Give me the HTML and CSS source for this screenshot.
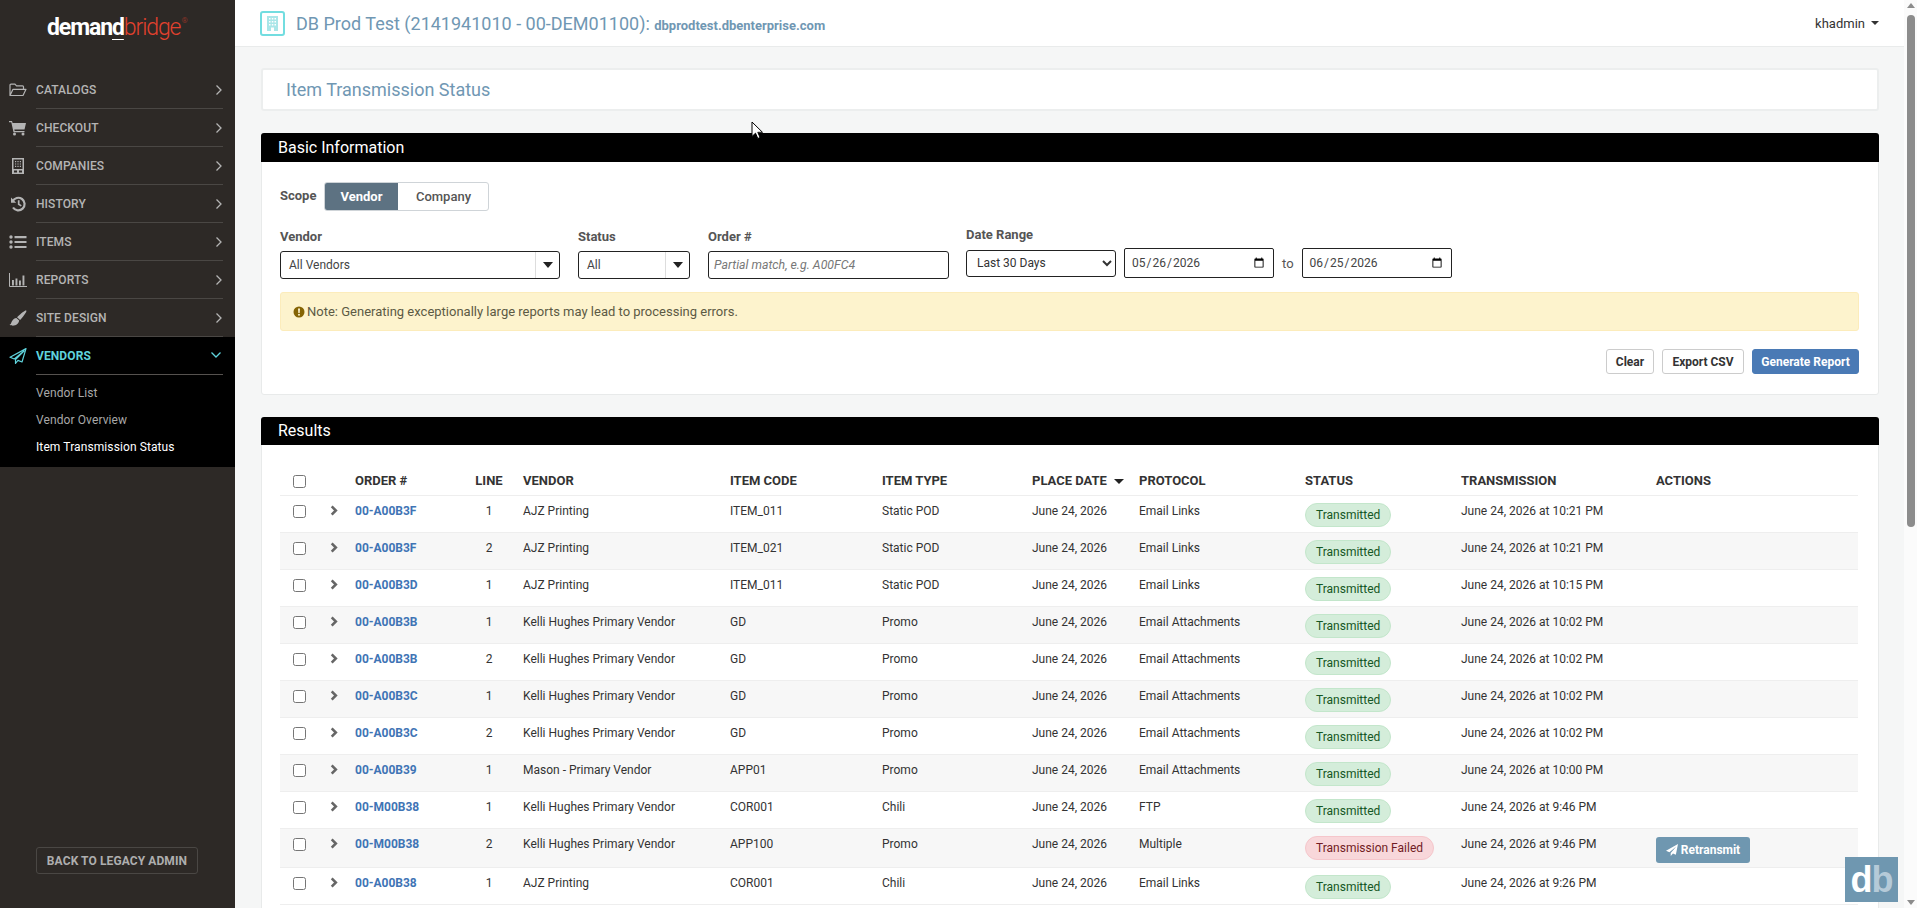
FILE: index.html
```html
<!DOCTYPE html>
<html lang="en">
<head>
<meta charset="utf-8">
<title>Item Transmission Status</title>
<link rel="stylesheet" href="styles.css">
</head>
<body>
<div class="app">
  <aside class="sidebar">
    <div class="logo"><span class="logo-a">deman<u>d</u></span><span class="logo-b">bridge</span><sup class="logo-r">®</sup></div>
    <nav class="nav">
      <a class="nav-item"><svg class="nav-ico" viewBox="0 0 18 14"><path d="M1 12.5V2.2c0-.6.4-1 1-1h4l1.5 1.6h6c.6 0 1 .4 1 1V6M1 12.5 4 6.3h13l-3 6.2H1Z" fill="none" stroke="currentColor" stroke-width="1.2" stroke-linejoin="round"/></svg><span class="nav-label">Catalogs</span><svg class="chev" viewBox="0 0 8 12"><path d="M1.5 1.5 6 6l-4.500 4.500" fill="none" stroke="currentColor" stroke-width="1.300"/></svg></a>
      <a class="nav-item"><svg class="nav-ico" viewBox="0 0 18 15"><path d="M0 .6h3l.6 1.900H17l-1.500 6.500H5.300l.4 1.500h9.800v1.200H4.500L2.300 1.800H0V.6Z" fill="currentColor"/><circle cx="5.500" cy="13.400" r="1.500" fill="currentColor"/><circle cx="14" cy="13.400" r="1.500" fill="currentColor"/></svg><span class="nav-label">Checkout</span><svg class="chev" viewBox="0 0 8 12"><path d="M1.500 1.500 6 6l-4.500 4.500" fill="none" stroke="currentColor" stroke-width="1.300"/></svg></a>
      <a class="nav-item"><svg class="nav-ico" viewBox="0 0 18 16"><path fill-rule="evenodd" d="M3 0h12v16H3V0Zm1.500 1.500V11h9V1.500h-9ZM6 3h1.200v1.200H6V3Zm2.400 0h1.200v1.200H8.400V3Zm2.400 0H12v1.200h-1.200V3ZM6 5.400h1.200v1.200H6V5.400Zm2.400 0h1.200v1.200H8.400V5.400Zm2.400 0H12v1.200h-1.200V5.400ZM6 7.800h1.200V9H6V7.800Zm2.400 0h1.200V9H8.400V7.800Zm2.400 0H12V9h-1.200V7.800ZM5 12.500V14.500h3v-2H5Zm5 0v2h3v-2h-3Z" fill="currentColor"/></svg><span class="nav-label">Companies</span><svg class="chev" viewBox="0 0 8 12"><path d="M1.500 1.500 6 6l-4.500 4.500" fill="none" stroke="currentColor" stroke-width="1.300"/></svg></a>
      <a class="nav-item"><svg class="nav-ico" viewBox="0 0 18 16"><path d="M3.600 5.400A6.300 6.300 0 1 1 4 11.500" fill="none" stroke="currentColor" stroke-width="2.200"/><path d="M2 1.600v5.200h5.200Z" fill="currentColor"/><path d="M9.700 4.300v4l2.600 1.600" fill="none" stroke="currentColor" stroke-width="1.700"/></svg><span class="nav-label">History</span><svg class="chev" viewBox="0 0 8 12"><path d="M1.500 1.500 6 6l-4.500 4.500" fill="none" stroke="currentColor" stroke-width="1.300"/></svg></a>
      <a class="nav-item"><svg class="nav-ico" viewBox="0 0 18 14"><circle cx="2" cy="2" r="1.700" fill="currentColor"/><circle cx="2" cy="7" r="1.700" fill="currentColor"/><circle cx="2" cy="12" r="1.700" fill="currentColor"/><path d="M5.500 1h12v2.200h-12zM5.500 5.900h12v2.200h-12zM5.500 10.900h12v2.200h-12z" fill="currentColor"/></svg><span class="nav-label">Items</span><svg class="chev" viewBox="0 0 8 12"><path d="M1.500 1.500 6 6l-4.500 4.500" fill="none" stroke="currentColor" stroke-width="1.300"/></svg></a>
      <a class="nav-item"><svg class="nav-ico" viewBox="0 0 18 14"><path d="M.5 0v13.500H18" fill="none" stroke="currentColor" stroke-width="1"/><path d="M3 7h1.900v5.500H3zM6.500 5.500h1.900v7H6.500zM10 7.500h1.900v5H10zM13.500 2.500h1.900v10h-1.900z" fill="currentColor"/></svg><span class="nav-label">Reports</span><svg class="chev" viewBox="0 0 8 12"><path d="M1.500 1.500 6 6l-4.500 4.500" fill="none" stroke="currentColor" stroke-width="1.300"/></svg></a>
      <a class="nav-item"><svg class="nav-ico" viewBox="0 0 18 16"><path d="M17 .2c.7.600.3 1.700-.3 2.600-1.700 2.600-3.800 5.600-5.600 7.100L8 7.300C10 5.400 14.700.9 17 .2ZM7.400 8l2.800 2.600c-.3 2.500-2.200 4.700-5.200 5-1.500.2-3.500-.1-4.500-.8 1.700-.7 1.500-2 2.300-3.400C3.700 9.600 5.600 8.200 7.400 8Z" fill="currentColor"/></svg><span class="nav-label">Site Design</span><svg class="chev" viewBox="0 0 8 12"><path d="M1.500 1.500 6 6l-4.500 4.500" fill="none" stroke="currentColor" stroke-width="1.300"/></svg></a>
      <div class="nav-open">
        <a class="nav-item nav-item-active"><svg class="nav-ico" viewBox="0 0 18 16"><path d="M17 .6 1 9.300l4.300 1.700L15 3 6.500 11.600v3.800l2.500-3 4 1.600L17 .6Z" fill="none" stroke="currentColor" stroke-width="1.200" stroke-linejoin="round"/></svg><span class="nav-label">Vendors</span><svg class="chev-down" viewBox="0 0 12 8"><path d="M1.500 1.500 6 6l4.500-4.500" fill="none" stroke="currentColor" stroke-width="1.300"/></svg></a>
        <div class="subnav">
          <a class="sub-item">Vendor List</a>
          <a class="sub-item">Vendor Overview</a>
          <a class="sub-item sub-current">Item Transmission Status</a>
        </div>
      </div>
    </nav>
    <button class="legacy">BACK TO LEGACY ADMIN</button>
  </aside>

  <div class="main">
    <header class="topbar">
      <span class="company-ico"><svg viewBox="0 0 11 15" width="11" height="15"><path fill-rule="evenodd" d="M0 0h11v15H0V0Zm2 2v1.500h1.500V2H2Zm2.800 0v1.500h1.500V2H4.800Zm2.700 0v1.500H9V2H7.500ZM2 5v1.500h1.500V5H2Zm2.800 0v1.500h1.500V5H4.800Zm2.700 0v1.500H9V5H7.500ZM2 8v1.500h1.500V8H2Zm2.800 0v1.500h1.500V8H4.800Zm2.700 0v1.500H9V8H7.500ZM4 11.500V15h3v-3.500H4Z" fill="#a9e6e8"/></svg></span>
      <h1 class="company">DB Prod Test (2141941010 - 00-DEM01100): <small class="domain">dbprodtest.dbenterprise.com</small></h1>
      <span class="user">khadmin<i class="caret"></i></span>
    </header>
    <div class="content">
      <div class="title-card">Item Transmission Status</div>

      <section class="card card-basic">
        <h2 class="card-head">Basic Information</h2>
        <div class="card-body">
          <div class="scope-row">
            <span class="lbl">Scope</span>
            <div class="toggle"><span class="toggle-on">Vendor</span><span class="toggle-off">Company</span></div>
          </div>
          <div class="filters">
            <div class="field f-vendor"><span class="lbl">Vendor</span><div class="combo"><span class="combo-val">All Vendors</span><span class="combo-btn"><i class="caret-lg"></i></span></div></div>
            <div class="field f-status"><span class="lbl">Status</span><div class="combo"><span class="combo-val">All</span><span class="combo-btn"><i class="caret-lg"></i></span></div></div>
            <div class="field f-order"><span class="lbl">Order #</span><input class="text-in" placeholder="Partial match, e.g. A00FC4"></div>
            <div class="field f-range">
              <span class="lbl lbl-range">Date Range</span>
              <div class="range-row">
                <select class="range-sel"><option>Last 30 Days</option></select>
                <input class="date-in" type="date" value="2026-05-26">
                <span class="to">to</span>
                <input class="date-in" type="date" value="2026-06-25">
              </div>
            </div>
          </div>
          <div class="alert"><svg class="alert-ico" viewBox="0 0 12 12"><path fill-rule="evenodd" d="M6 .5a5.500 5.500 0 1 1 0 11 5.500 5.500 0 0 1 0-11ZM5 2.500l.3 4.500h1.400L7 2.500H5Zm1 5.300a1 1 0 1 0 0 2 1 1 0 0 0 0-2Z" fill="#856404"/></svg>Note: Generating exceptionally large reports may lead to processing errors.</div>
          <div class="actions">
            <button class="btn btn-clear">Clear</button>
            <button class="btn btn-export">Export CSV</button>
            <button class="btn btn-primary">Generate Report</button>
          </div>
        </div>
      </section>

      <section class="card card-results">
        <h2 class="card-head">Results</h2>
        <div class="table-wrap">
          <table class="grid">
            <colgroup><col class="c1"><col class="c2"><col class="c3"><col class="c4"><col class="c5"><col class="c6"><col class="c7"><col class="c8"><col class="c9"><col class="c10"><col class="c11"><col class="c12"></colgroup>
            <thead>
              <tr><th class="cb"><input type="checkbox"></th><th></th><th>ORDER #</th><th class="ctr">LINE</th><th class="pad">VENDOR</th><th>ITEM CODE</th><th>ITEM TYPE</th><th>PLACE DATE<i class="caret-sort"></i></th><th>PROTOCOL</th><th>STATUS</th><th>TRANSMISSION</th><th>ACTIONS</th></tr>
            </thead>
            <tbody id="rows">
              <tr><td class="cb"><input type="checkbox"></td><td><svg class="row-chev" viewBox="0 0 8 12"><path d="M1.500 1.500 6 6l-4.500 4.500" fill="none" stroke="currentColor" stroke-width="2.800"/></svg></td><td><a class="order">00-A00B3F</a></td><td class="ctr">1</td><td class="pad">AJZ Printing</td><td>ITEM_011</td><td>Static POD</td><td>June 24, 2026</td><td>Email Links</td><td><span class="badge ok">Transmitted</span></td><td>June 24, 2026 at 10:21 PM</td><td></td></tr>
              <tr><td class="cb"><input type="checkbox"></td><td><svg class="row-chev" viewBox="0 0 8 12"><path d="M1.500 1.500 6 6l-4.500 4.500" fill="none" stroke="currentColor" stroke-width="2.800"/></svg></td><td><a class="order">00-A00B3F</a></td><td class="ctr">2</td><td class="pad">AJZ Printing</td><td>ITEM_021</td><td>Static POD</td><td>June 24, 2026</td><td>Email Links</td><td><span class="badge ok">Transmitted</span></td><td>June 24, 2026 at 10:21 PM</td><td></td></tr>
              <tr><td class="cb"><input type="checkbox"></td><td><svg class="row-chev" viewBox="0 0 8 12"><path d="M1.500 1.500 6 6l-4.500 4.500" fill="none" stroke="currentColor" stroke-width="2.800"/></svg></td><td><a class="order">00-A00B3D</a></td><td class="ctr">1</td><td class="pad">AJZ Printing</td><td>ITEM_011</td><td>Static POD</td><td>June 24, 2026</td><td>Email Links</td><td><span class="badge ok">Transmitted</span></td><td>June 24, 2026 at 10:15 PM</td><td></td></tr>
              <tr><td class="cb"><input type="checkbox"></td><td><svg class="row-chev" viewBox="0 0 8 12"><path d="M1.500 1.500 6 6l-4.500 4.500" fill="none" stroke="currentColor" stroke-width="2.800"/></svg></td><td><a class="order">00-A00B3B</a></td><td class="ctr">1</td><td class="pad">Kelli Hughes Primary Vendor</td><td>GD</td><td>Promo</td><td>June 24, 2026</td><td>Email Attachments</td><td><span class="badge ok">Transmitted</span></td><td>June 24, 2026 at 10:02 PM</td><td></td></tr>
              <tr><td class="cb"><input type="checkbox"></td><td><svg class="row-chev" viewBox="0 0 8 12"><path d="M1.500 1.500 6 6l-4.500 4.500" fill="none" stroke="currentColor" stroke-width="2.800"/></svg></td><td><a class="order">00-A00B3B</a></td><td class="ctr">2</td><td class="pad">Kelli Hughes Primary Vendor</td><td>GD</td><td>Promo</td><td>June 24, 2026</td><td>Email Attachments</td><td><span class="badge ok">Transmitted</span></td><td>June 24, 2026 at 10:02 PM</td><td></td></tr>
              <tr><td class="cb"><input type="checkbox"></td><td><svg class="row-chev" viewBox="0 0 8 12"><path d="M1.500 1.500 6 6l-4.500 4.500" fill="none" stroke="currentColor" stroke-width="2.800"/></svg></td><td><a class="order">00-A00B3C</a></td><td class="ctr">1</td><td class="pad">Kelli Hughes Primary Vendor</td><td>GD</td><td>Promo</td><td>June 24, 2026</td><td>Email Attachments</td><td><span class="badge ok">Transmitted</span></td><td>June 24, 2026 at 10:02 PM</td><td></td></tr>
              <tr><td class="cb"><input type="checkbox"></td><td><svg class="row-chev" viewBox="0 0 8 12"><path d="M1.500 1.500 6 6l-4.500 4.500" fill="none" stroke="currentColor" stroke-width="2.800"/></svg></td><td><a class="order">00-A00B3C</a></td><td class="ctr">2</td><td class="pad">Kelli Hughes Primary Vendor</td><td>GD</td><td>Promo</td><td>June 24, 2026</td><td>Email Attachments</td><td><span class="badge ok">Transmitted</span></td><td>June 24, 2026 at 10:02 PM</td><td></td></tr>
              <tr><td class="cb"><input type="checkbox"></td><td><svg class="row-chev" viewBox="0 0 8 12"><path d="M1.500 1.500 6 6l-4.500 4.500" fill="none" stroke="currentColor" stroke-width="2.800"/></svg></td><td><a class="order">00-A00B39</a></td><td class="ctr">1</td><td class="pad">Mason - Primary Vendor</td><td>APP01</td><td>Promo</td><td>June 24, 2026</td><td>Email Attachments</td><td><span class="badge ok">Transmitted</span></td><td>June 24, 2026 at 10:00 PM</td><td></td></tr>
              <tr><td class="cb"><input type="checkbox"></td><td><svg class="row-chev" viewBox="0 0 8 12"><path d="M1.500 1.500 6 6l-4.500 4.500" fill="none" stroke="currentColor" stroke-width="2.800"/></svg></td><td><a class="order">00-M00B38</a></td><td class="ctr">1</td><td class="pad">Kelli Hughes Primary Vendor</td><td>COR001</td><td>Chili</td><td>June 24, 2026</td><td>FTP</td><td><span class="badge ok">Transmitted</span></td><td>June 24, 2026 at 9:46 PM</td><td></td></tr>
              <tr class="row-tall"><td class="cb"><input type="checkbox"></td><td><svg class="row-chev" viewBox="0 0 8 12"><path d="M1.500 1.500 6 6l-4.500 4.500" fill="none" stroke="currentColor" stroke-width="2.800"/></svg></td><td><a class="order">00-M00B38</a></td><td class="ctr">2</td><td class="pad">Kelli Hughes Primary Vendor</td><td>APP100</td><td>Promo</td><td>June 24, 2026</td><td>Multiple</td><td><span class="badge bad">Transmission Failed</span></td><td>June 24, 2026 at 9:46 PM</td><td><button class="retransmit"><svg viewBox="0 0 14 14" width="12" height="12"><path d="M14 0 0 8l4 1.600L12 3 5.500 10.500V14l2.600-2.900 3.400 1.400L14 0Z" fill="#fff"/></svg>Retransmit</button></td></tr>
              <tr><td class="cb"><input type="checkbox"></td><td><svg class="row-chev" viewBox="0 0 8 12"><path d="M1.500 1.500 6 6l-4.500 4.500" fill="none" stroke="currentColor" stroke-width="2.800"/></svg></td><td><a class="order">00-A00B38</a></td><td class="ctr">1</td><td class="pad">AJZ Printing</td><td>COR001</td><td>Chili</td><td>June 24, 2026</td><td>Email Links</td><td><span class="badge ok">Transmitted</span></td><td>June 24, 2026 at 9:26 PM</td><td></td></tr>
            </tbody>
          </table>
        </div>
      </section>
    </div>
  </div>

  <div class="scrollbar"><i class="sb-up"></i><div class="sb-track"><div class="sb-thumb"></div></div><i class="sb-down"></i></div>
</div>
<div class="watermark"><span class="wm-d">d</span><span class="wm-b">b</span></div>
<svg class="cursor" viewBox="0 0 12 19" width="12" height="19"><path d="M1 1v14.500l3.500-3.300 2.300 5.300 2.300-1-2.300-5.200h4.700L1 1Z" fill="#fff" stroke="#000" stroke-width="1"/></svg>
</body>
</html>
```
FILE: styles.css
```css
* { box-sizing: border-box; }
html, body { margin: 0; height: 100%; overflow: hidden; }
body { font-family: Roboto, "Liberation Sans", sans-serif; font-size: 12px; color: #333; background: #f5f6f6; }
.app { display: flex; height: 100vh; overflow: hidden; }

/* sidebar */
.sidebar { flex: 0 0 235px; background: #2d2926; display: flex; flex-direction: column; }
.logo { height: 71px; padding: 13px 0 0 47px; font-size: 23px; line-height: 30px; letter-spacing: -1.1px; white-space: nowrap; }
.logo-a { color: #fff; font-weight: 700; }
.logo-a u { text-underline-offset: 4px; text-decoration-thickness: 1px; }
.logo-b { color: #e2412e; font-weight: 300; }
.logo-r { color: #8c3327; font-size: 8px; vertical-align: 12px; line-height: 0; letter-spacing: 0; margin-left: 1px; }
.nav { display: flex; flex-direction: column; flex: 1; }
.nav-item { height: 38px; display: flex; align-items: center; color: #b4b4b4; position: relative; }
.nav-ico { width: 18px; height: 16px; margin-left: 9px; flex: none; }
.nav-label { flex: 1; margin-left: 9px; font-size: 12px; font-weight: 500; text-transform: uppercase; align-self: stretch; display: flex; align-items: center; border-bottom: 1px solid #4a4744; margin-right: 12px; margin-top: 0; letter-spacing: .1px; }
.chev { position: absolute; right: 12px; top: 13px; width: 8px; height: 12px; }
.chev-down { position: absolute; right: 13px; top: 14px; width: 12px; height: 8px; }
.nav-open { background: #000; height: 130px; }
.nav-item-active { color: #5fd3dc; }
.nav-item-active .nav-label { font-weight: 700; border-bottom-color: #56524f; }
.subnav { display: flex; flex-direction: column; padding-left: 36px; padding-top: 5px; }
.sub-item { height: 27px; line-height: 27px; color: #a8a8a8; font-size: 12px; letter-spacing: .1px; }
.sub-current { color: #fff; }
.legacy { align-self: flex-start; margin: 0 0 34px 36px; width: 162px; height: 27px; background: transparent; border: 1px solid #4a4744; border-radius: 3px; color: #aeaeae; font: 700 12px Roboto, sans-serif; letter-spacing: .1px; padding: 0; }

/* main */
.main { flex: 1; min-width: 0; display: flex; flex-direction: column; overflow: hidden; }
.topbar { flex: none; height: 47px; background: #fff; border-bottom: 1px solid #e9ebeb; display: flex; align-items: center; padding: 0 25px 0 25px; }
.company-ico { width: 25px; height: 25px; border: 2px solid #72dde0; border-radius: 3px; display: flex; align-items: center; justify-content: center; flex: none; }
.company { margin: 0 0 0 11px; flex: 1; font-size: 18px; font-weight: 400; color: #7097b3; white-space: nowrap; }
.domain { font-size: 13px; font-weight: 700; }
.user { font-size: 13px; color: #333; display: flex; align-items: center; }
.caret { width: 0; height: 0; margin-left: 6px; border: 4px solid transparent; border-top-color: #333; border-bottom: 0; }
.content { flex: 1; padding: 21px 25px 0 26px; overflow: hidden; }
.title-card { height: 43px; background: #fff; border: 2px solid #eceeee; border-radius: 3px; padding-left: 23px; font-size: 18px; line-height: 39px; color: #7097b3; }

.card { background: #fff; border: 1px solid #e8eaea; border-radius: 3px; margin-top: 22px; }
.card-head { margin: -1px -1px 0; height: 28px; background: #000; color: #fff; font-size: 16px; line-height: 28px; font-weight: 400; padding-left: 17px; border-radius: 3px 3px 0 0; }
.card-basic { height: 262px; }
.card-basic .card-head { height: 29px; line-height: 30px; }
.card-body { padding: 20px 19px 0 18px; }
.lbl { font-size: 13px; font-weight: 700; color: #555; }
.scope-row { display: flex; align-items: center; gap: 8px; margin-top: 0; }
.scope-row .lbl { margin-left: 0; position: relative; top: -1px; }
.toggle { display: flex; height: 29px; width: 165px; border: 1px solid #cfd4d8; border-radius: 3px; overflow: hidden; }
.toggle-on { width: 74px; background: #5d7282; color: #fff; font-weight: 700; font-size: 13px; display: flex; align-items: center; justify-content: center; margin: -1px 0 -1px -1px; }
.toggle-off { flex: 1; color: #555; font-weight: 500; font-size: 13px; display: flex; align-items: center; justify-content: center; }
.filters { display: flex; margin-top: 18px; }
.field { display: flex; flex-direction: column; gap: 6px; }
.field > .lbl { height: 16px; line-height: 16px; }
.f-vendor { width: 280px; margin-right: 18px; }
.f-status { width: 112px; margin-right: 18px; }
.f-order { width: 241px; margin-right: 17px; }
.f-range { margin-top: -2px; gap: 5px; }
.field .lbl-range { color: #555; margin-bottom: 0; height: 16px; line-height: 16px; }
.combo { height: 28px; border: 1px solid #222; border-radius: 3px; display: flex; align-items: center; background: #fff; }
.combo-val { flex: 1; padding-left: 8px; font-size: 12px; color: #444; }
.combo-btn { width: 24px; height: 100%; border-left: 1px solid #ddd; display: flex; align-items: center; justify-content: center; }
.caret-lg { width: 0; height: 0; border: 5px solid transparent; border-top: 6px solid #222; border-bottom: 0; }
.text-in { height: 28px; border: 1px solid #222; border-radius: 3px; padding: 0 5px; font: 12.300px Roboto, sans-serif; outline: 0; }
.text-in::placeholder { font-style: italic; color: #777; }
.range-row { display: flex; align-items: center; height: 30px; }
.range-sel { width: 150px; height: 27px; border: 1px solid #222; border-radius: 3px; background: #fff; padding-left: 6px; font: 12px Roboto, sans-serif; color: #333; }
.date-in { width: 150px; height: 30px; border: 1px solid #222; border-radius: 2px; margin-left: 8px; padding: 0 6px; font: 12px Roboto, sans-serif; color: #444; background: #fff; }
.to { margin: 0 8px; font-size: 13px; color: #555; }
.to + .date-in { margin-left: 0; }
.alert { margin-top: 13px; height: 39px; background: #fdf3cd; border: 1px solid #fcecbb; border-radius: 3px; padding-left: 12px; display: flex; align-items: center; font-size: 13px; color: #5c5a44; }
.alert-ico { width: 12px; height: 12px; margin-right: 2px; }
.actions { display: flex; justify-content: flex-end; gap: 8px; margin-top: 18px; }
.btn { height: 25px; border-radius: 3px; font: 700 12px Roboto, sans-serif; padding: 0; background: #fff; color: #333; border: 1px solid #ccc; }
.btn-clear { width: 48px; }
.btn-export { width: 82px; }
.btn-primary { width: 107px; background: #4a7ab5; border-color: #4a7ab5; color: #fff; }

.card-results { height: 600px; }
.table-wrap { padding: 21px 19px 0 18px; }
.grid { border-collapse: collapse; table-layout: fixed; width: 1578px; font-size: 12px; }
.c1 { width: 47px; } .c2 { width: 28px; } .c3 { width: 110px; } .c4 { width: 48px; } .c5 { width: 217px; } .c6 { width: 152px; }
.c7 { width: 150px; } .c8 { width: 107px; } .c9 { width: 166px; } .c10 { width: 156px; } .c11 { width: 195px; } .c12 { width: 202px; }
.grid th { height: 29px; padding: 1px 0 0; text-align: left; font-weight: 700; font-size: 13px; color: #333; white-space: nowrap; border-bottom: 1px solid #eee; }
.grid td { height: 37px; padding: 8px 0 0; vertical-align: top; line-height: 15px; color: #333; white-space: nowrap; border-bottom: 1px solid #eee; }
.grid .row-tall td { height: 39px; }
.grid tbody tr:nth-child(even) { background: #f7f7f7; }
.grid .ctr { text-align: center; }
.grid .pad { padding-left: 10px; }
.grid .cb { padding-left: 13px; }
.grid th.cb { padding-top: 2px; }
.grid input[type=checkbox] { width: 13px; height: 13px; margin: 0; display: block; }
.grid td.cb { padding-top: 9px; }
.row-chev { display: block; width: 8px; height: 11px; margin: 1px 0 0 3px; color: #666; }
.order { color: #3f74b5; font-weight: 700; }
.caret-sort { display: inline-block; width: 0; height: 0; margin-left: 7px; vertical-align: 1px; border: 5px solid transparent; border-top: 5px solid #222; border-bottom: 0; }
.badge { display: inline-block; height: 24px; line-height: 22px; margin-top: -1px; padding: 0 10px; border-radius: 12px; font-size: 12px; border: 1px solid; }
.ok { background: #d4edda; border-color: #c3e6cb; color: #155724; }
.bad { background: #f8d7da; border-color: #f5c6cb; color: #721c24; }
.retransmit { height: 26px; width: 94px; margin-top: 0; background: #6f97b0; border: 0; border-radius: 3px; color: #fff; font: 700 12px Roboto, sans-serif; display: flex; align-items: center; justify-content: center; gap: 3px; padding: 0; }

/* scrollbar */
.scrollbar { flex: 0 0 13px; background: #fbfbfb; position: relative; }
.scrollbar { display: flex; flex-direction: column; align-items: center; }
.sb-up { width: 0; height: 0; margin-top: 3px; border: 4px solid transparent; border-bottom: 5px solid #8c8c8c; border-top: 0; }
.sb-track { flex: 1; width: 100%; padding: 7px 2px 0 3px; }
.sb-thumb { height: 512px; background: #8c8c8c; border-radius: 4px; }
.sb-down { width: 0; height: 0; margin-bottom: 3px; border: 4px solid transparent; border-top: 5px solid #8c8c8c; border-bottom: 0; }

/* overlays */
.watermark { position: absolute; left: 1845px; top: 857px; width: 53px; height: 45px; background: #6f97b0; font: 700 36px/45px "Liberation Sans", sans-serif; letter-spacing: -1px; text-align: center; }
.wm-d { color: #fff; }
.wm-b { color: #b5cad8; }
.cursor { position: absolute; left: 751px; top: 121px; }
```
